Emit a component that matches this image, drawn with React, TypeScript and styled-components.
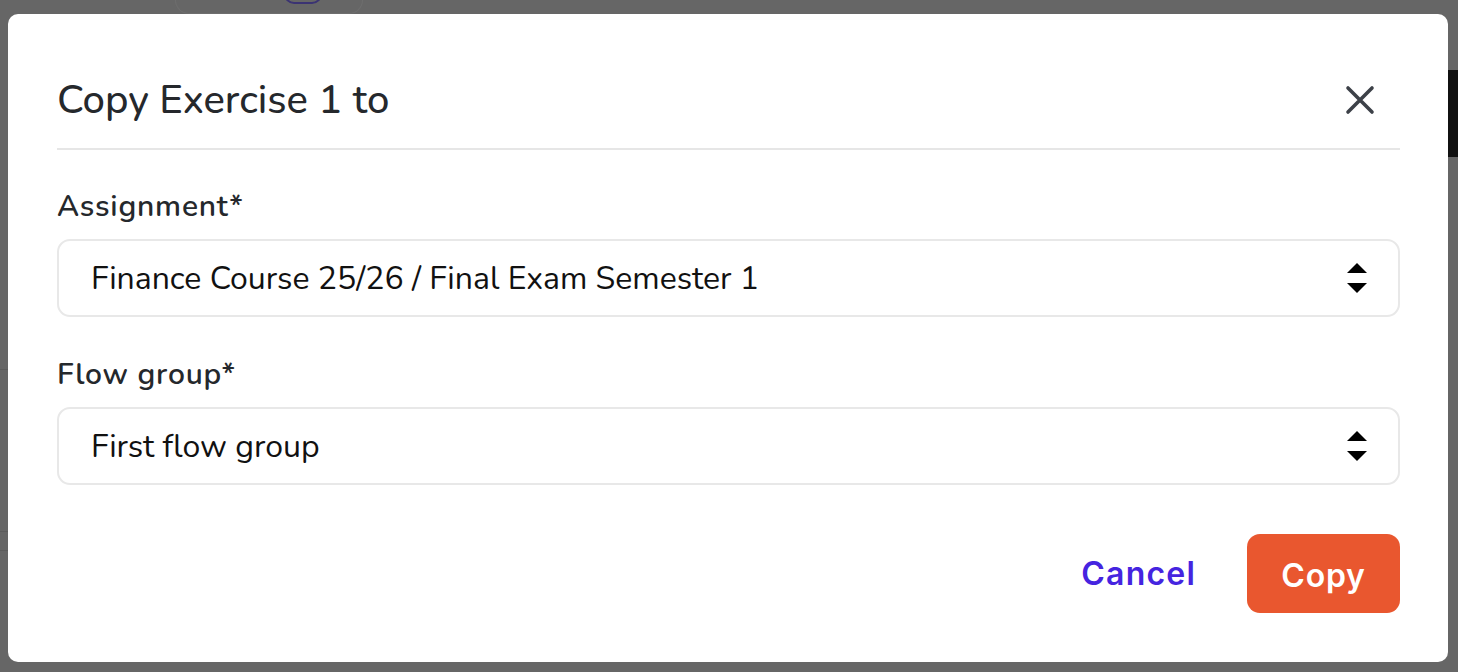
import styled, { createGlobalStyle } from 'styled-components';

const GlobalStyle = createGlobalStyle`
  html, body {
    margin: 0;
    padding: 0;
    background: #666666;
    font-family: "Nunito", "Noto Sans", sans-serif;
  }
  * {
    box-sizing: border-box;
  }
`;

const Screen = styled.div`
  position: relative;
  width: 1458px;
  height: 672px;
  overflow: hidden;
  background: #666666;
`;

// dimmed page content peeking out behind the modal
const BehindCard = styled.div`
  position: absolute;
  left: 175px;
  top: -20px;
  width: 188px;
  height: 34px;
  border: 1px solid #6e6e6e;
  border-top: none;
  border-radius: 0 0 14px 14px;
`;

const BehindPill = styled.div`
  position: absolute;
  left: 284px;
  top: -16px;
  width: 38px;
  height: 20px;
  border: 2px solid #3b3373;
  border-radius: 10px;
`;

const BehindBar = styled.div`
  position: absolute;
  right: 0;
  top: 70px;
  width: 10px;
  height: 87px;
  background: #111111;
`;

const BehindLine = styled.div<{ $top: number }>`
  position: absolute;
  left: 0;
  top: ${(p) => p.$top}px;
  width: 8px;
  height: 1px;
  background: #5c5c5c;
`;

const Overlay = styled.div`
  position: relative;
  padding: 14px 10px 10px 8px;
`;

const Dialog = styled.div`
  width: 1440px;
  height: 648px;
  background: #ffffff;
  border-radius: 10px;
  padding: 62px 48px 49px 49px;
  display: flex;
  flex-direction: column;
`;

const Header = styled.div`
  display: flex;
  align-items: center;
  justify-content: space-between;
  padding-bottom: 24px;
  border-bottom: 2px solid #e6e6e6;
`;

const Title = styled.h2`
  margin: 0;
  font-size: 40px;
  line-height: 48px;
  font-weight: 500;
  color: #25282c;
`;

const CloseButton = styled.button`
  border: none;
  background: none;
  padding: 0;
  margin-right: 24px;
  width: 32px;
  height: 32px;
  display: flex;
  align-items: center;
  justify-content: center;
  cursor: pointer;
  color: #3d4148;
`;

const Field = styled.div<{ $top: number }>`
  margin-top: ${(p) => p.$top}px;
  display: flex;
  flex-direction: column;
  gap: 14px;
`;

const Label = styled.label`
  font-size: 30px;
  line-height: 36px;
  font-weight: 600;
  letter-spacing: 0.8px;
  color: #25282c;
`;

const SelectBox = styled.div`
  height: 78px;
  border: 2px solid #e8e8e8;
  border-radius: 13px;
  display: flex;
  align-items: center;
  justify-content: space-between;
  padding: 0 31px 0 32px;
  font-size: 32px;
  color: #111111;
`;

const Footer = styled.div`
  margin-top: auto;
  display: flex;
  justify-content: flex-end;
  align-items: center;
  gap: 51px;
`;

const CancelButton = styled.button`
  border: none;
  background: none;
  padding: 0;
  font-family: Inter, "Noto Sans", sans-serif;
  font-size: 32px;
  font-weight: 600;
  letter-spacing: 1.2px;
  color: #4524e0;
  cursor: pointer;
`;

const CopyButton = styled.button`
  width: 153px;
  height: 79px;
  border: none;
  border-radius: 13px;
  background: #e9572f;
  color: #ffffff;
  font-family: Inter, "Noto Sans", sans-serif;
  font-size: 32px;
  font-weight: 600;
  letter-spacing: 0.8px;
  padding-top: 4px;
  cursor: pointer;
`;

function UpDownIcon() {
  return (
    <svg width="20" height="32" viewBox="0 0 20 32">
      <path d="M10 1 L20 11 L0 11 Z" fill="#000" />
      <path d="M0 21 L20 21 L10 31 Z" fill="#000" />
    </svg>
  );
}

function CloseIcon() {
  return (
    <svg width="30" height="30" viewBox="0 0 30 30">
      <path
        d="M3 3 L27 27 M27 3 L3 27"
        stroke="currentColor"
        strokeWidth="3.6"
        strokeLinecap="round"
      />
    </svg>
  );
}

export default function App() {
  return (
    <>
      <GlobalStyle />
      <Screen>
        <BehindCard />
        <BehindPill />
        <BehindBar />
        <BehindLine $top={369} />
        <BehindLine $top={531} />
        <BehindLine $top={550} />
        <Overlay>
          <Dialog>
            <Header>
              <Title>Copy Exercise 1 to</Title>
              <CloseButton aria-label="Close">
                <CloseIcon />
              </CloseButton>
            </Header>
            <Field $top={39}>
              <Label>Assignment*</Label>
              <SelectBox>
                <span>Finance Course 25/26 / Final Exam Semester 1</span>
                <UpDownIcon />
              </SelectBox>
            </Field>
            <Field $top={40}>
              <Label>Flow group*</Label>
              <SelectBox>
                <span>First flow group</span>
                <UpDownIcon />
              </SelectBox>
            </Field>
            <Footer>
              <CancelButton>Cancel</CancelButton>
              <CopyButton>Copy</CopyButton>
            </Footer>
          </Dialog>
        </Overlay>
      </Screen>
    </>
  );
}
